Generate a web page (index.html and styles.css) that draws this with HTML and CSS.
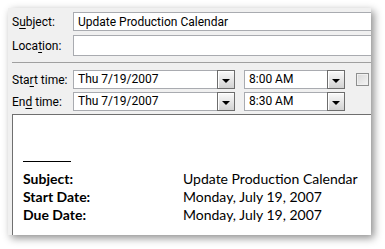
FILE: index.html
```html
<!DOCTYPE html>
<html>
<head>
<meta charset="utf-8">
<link rel="stylesheet" href="styles.css">
</head>
<body>
<div class="panel">
  <div class="form">
    <div class="row r-subject">
      <span class="label">S<u>u</u>bject:</span>
      <div class="field"><span>Update Production Calendar</span></div>
    </div>
    <div class="row r-location">
      <span class="label">Loca<u>t</u>ion:</span>
      <div class="field"></div>
    </div>
    <div class="sep"></div>
    <div class="row r-start">
      <span class="label">Sta<u>r</u>t time:</span>
      <div class="combo date"><span class="val">Thu 7/19/2007</span><span class="btn"><i></i></span></div>
      <div class="combo time"><span class="val">8:00 AM</span><span class="btn"><i></i></span></div>
      <span class="check"></span>
    </div>
    <div class="row r-end">
      <span class="label">En<u>d</u> time:</span>
      <div class="combo date"><span class="val">Thu 7/19/2007</span><span class="btn"><i></i></span></div>
      <div class="combo time"><span class="val">8:30 AM</span><span class="btn"><i></i></span></div>
    </div>
  </div>
  <div class="body">
    <div class="rule"></div>
    <div class="info">
      <span class="k">Subject:</span><span class="v">Update Production Calendar</span>
      <span class="k">Start Date:</span><span class="v">Monday, July 19, 2007</span>
      <span class="k">Due Date:</span><span class="v">Monday, July 19, 2007</span>
    </div>
  </div>
</div>
</body>
</html>
```

FILE: styles.css
```css
html, body {
  margin: 0;
  padding: 0;
  background: #ffffff;
}
body {
  padding: 8px 0 0 8px;
  width: 385px;
  height: 249px;
  box-sizing: border-box;
  overflow: hidden;
}
.panel {
  width: 363px;
  height: 227px;
  background: #f0f0f0;
  box-shadow: 3px 3px 8px rgba(0, 0, 0, 0.45);
  display: flex;
  flex-direction: column;
  overflow: hidden;
  font-family: "Roboto", "Noto Sans", sans-serif;
  font-size: 12px;
  color: #000;
}
.form {
  padding: 4px 0 0 4px;
  display: flex;
  flex-direction: column;
}
.row {
  display: flex;
  align-items: center;
}
.label {
  width: 61px;
  flex: none;
  line-height: 16px;
}
.label u {
  text-decoration-thickness: 1px;
  text-underline-offset: 2px;
}
.field {
  flex: 1;
  height: 19px;
  box-sizing: border-box;
  background: #fff;
  border: 1px solid #a9abb0;
  border-right: none;
  display: flex;
  align-items: center;
  padding-left: 4px;
  line-height: 16px;
}
.r-location { margin-top: 4px; }
.r-location .field { height: 21px; }
.sep {
  height: 1px;
  background: #a0a0a0;
  margin: 6px 0 7px 0;
}
.r-end { margin-top: 3px; }
.combo {
  height: 19px;
  box-sizing: border-box;
  background: #fff;
  border: 1px solid #a9abb0;
  display: flex;
  align-items: stretch;
}
.combo .val {
  flex: 1;
  padding-left: 4px;
  line-height: 17px;
}
.combo.date { width: 162px; }
.combo.time { width: 101px; margin-left: 9px; }
.btn {
  width: 18px;
  box-sizing: border-box;
  border: 1px solid #6d6d6d;
  margin: -1px -1px -1px 0;
  height: 19px;
  background: linear-gradient(#fafafa, #e6e6e6 50%, #d2d2d2);
  box-shadow: inset 1px 1px 0 #fff;
  display: flex;
  align-items: center;
  justify-content: center;
}
.btn i {
  display: block;
  width: 0;
  height: 0;
  border-left: 4px solid transparent;
  border-right: 4px solid transparent;
  border-top: 4px solid #000;
  margin-top: 2px;
}
.check {
  width: 13px;
  height: 13px;
  box-sizing: border-box;
  border: 1px solid #8e8f8f;
  background: linear-gradient(135deg, #d8d8d8, #f4f4f4);
  box-shadow: inset 0 0 0 1px #f0f0f0;
  margin-left: 11px;
}
.body {
  margin: 3px 0 0 4px;
  flex: 1;
  background: #fff;
  border-left: 1px solid #6f6f6f;
  border-top: 1px solid #6f6f6f;
  padding: 46px 0 0 10px;
  font-family: "Lato", "Noto Sans", sans-serif;
  font-size: 14px;
}
.rule {
  width: 48px;
  height: 1px;
  background: #000;
}
.info {
  margin-top: 8px;
  display: grid;
  grid-template-columns: 160px auto;
  line-height: 18px;
}
.k { font-weight: bold; }
```
